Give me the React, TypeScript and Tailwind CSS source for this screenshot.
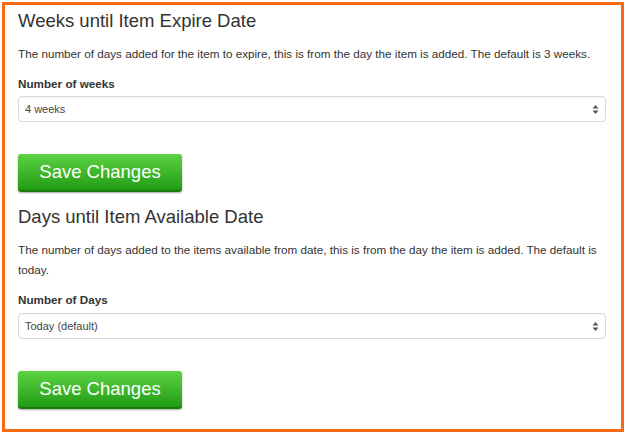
import React from 'react';

const font = { fontFamily: '"Liberation Sans", Arial, sans-serif' };

const SelectBox: React.FC<{ value: string }> = ({ value }) => (
  <div className="h-[26px] w-full rounded-[4px] border border-[#d9d9d9] bg-white flex items-center justify-between pl-[6px] pr-[6px] shadow-[inset_0_1px_1px_rgba(0,0,0,0.04)]">
    <span className="text-[11px] text-[#444]">{value}</span>
    <svg width="7" height="11" viewBox="0 0 7 11" className="text-[#555]">
      <path d="M3.5 1 L6.5 4.5 L0.5 4.5 Z" fill="currentColor" />
      <path d="M3.5 10 L6.5 6.5 L0.5 6.5 Z" fill="currentColor" />
    </svg>
  </div>
);

const SaveButton: React.FC = () => (
  <button className="h-[38px] w-[164px] rounded-[3px] border-b-2 border-[#1a7a0c] bg-gradient-to-b from-[#5bd343] to-[#1f9c12] text-white text-[18.5px] leading-none shadow-[0_1px_2px_rgba(0,0,0,0.35)]">
    Save Changes
  </button>
);

interface SectionProps {
  title: string;
  description: string;
  label: string;
  value: string;
  selectGap: string;
}

const Section: React.FC<SectionProps> = ({ title, description, label, value, selectGap }) => (
  <div className="flex flex-col">
    <h4 className="text-[18.5px] leading-[24px] text-[#333]">{title}</h4>
    <p className="mt-[11px] text-[11.7px] leading-[20px] text-[#333]">{description}</p>
    <label className="mt-[11px] text-[11.7px] leading-[18px] font-bold text-[#333]">{label}</label>
    <div className={selectGap}>
      <SelectBox value={value} />
    </div>
    <div className="mt-[32px]">
      <SaveButton />
    </div>
  </div>
);

export default function App() {
  return (
    <div className="w-[628px] h-[433px] bg-white p-[2px]" style={font}>
      <div className="h-[430px] w-[622px] border-[3px] border-[#f96b12] pl-[13px] pr-[15px] pt-[4px] flex flex-col gap-[13px]">
        <Section
          title="Weeks until Item Expire Date"
          description="The number of days added for the item to expire, this is from the day the item is added. The default is 3 weeks."
          label="Number of weeks"
          value="4 weeks"
          selectGap="mt-[3px]"
        />
        <Section
          title="Days until Item Available Date"
          description="The number of days added to the items available from date, this is from the day the item is added. The default is today."
          label="Number of Days"
          value="Today (default)"
          selectGap="mt-[4px]"
        />
      </div>
    </div>
  );
}
